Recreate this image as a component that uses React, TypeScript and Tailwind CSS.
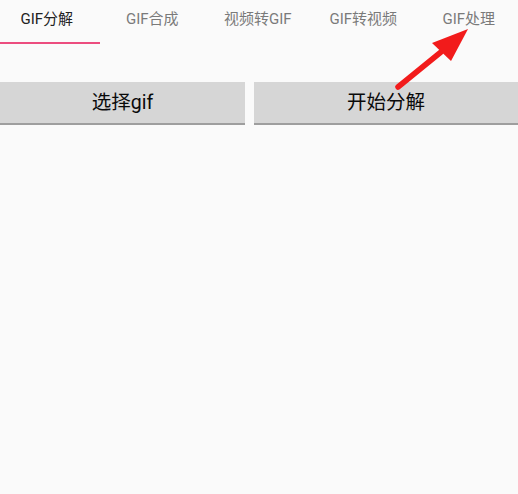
import * as React from "react";

const tabs = ["GIF分解", "GIF合成", "视频转GIF", "GIF转视频", "GIF处理"];

function Arrow() {
  return (
    <svg
      className="pointer-events-none absolute left-0 top-0"
      width="518"
      height="494"
      viewBox="0 0 518 494"
      aria-hidden="true"
    >
      <line x1="398" y1="87" x2="441" y2="52" stroke="#f21b1b" strokeWidth="5.5" strokeLinecap="round" />
      <polygon points="468,29 432,43 451,61" fill="#f21b1b" />
    </svg>
  );
}

export default function App() {
  const [active, setActive] = React.useState(0);

  return (
    <div
      className="relative h-[494px] w-[518px] overflow-hidden bg-[#fafafa]"
      style={{ fontFamily: "Roboto, 'Noto Sans CJK SC', sans-serif" }}
    >
      <div className="flex h-[45px] -ml-[6px]">
        {tabs.map((t, i) => (
          <button
            key={t}
            onClick={() => setActive(i)}
            className={
              "relative flex h-full w-[105.5px] shrink-0 items-start justify-center pt-[8px] text-[15px] " +
              (i === active ? "text-[#222222]" : "text-[#7a7a7a]")
            }
          >
            {t}
            {i === active && (
              <span className="absolute bottom-[1px] left-0 right-0 h-[2px] bg-[#ec4d7f]" />
            )}
          </button>
        ))}
      </div>

      <div className="mt-[37px] flex gap-[9px]">
        <button className="h-[43px] w-[245px] border-b-2 border-[#9e9e9e] bg-[#d6d6d6] text-[19.5px] text-[#0a0a0a]">
          选择gif
        </button>
        <button className="h-[43px] flex-1 border-b-2 border-[#9e9e9e] bg-[#d6d6d6] text-[19.5px] text-[#0a0a0a]">
          开始分解
        </button>
      </div>

      <Arrow />
    </div>
  );
}
